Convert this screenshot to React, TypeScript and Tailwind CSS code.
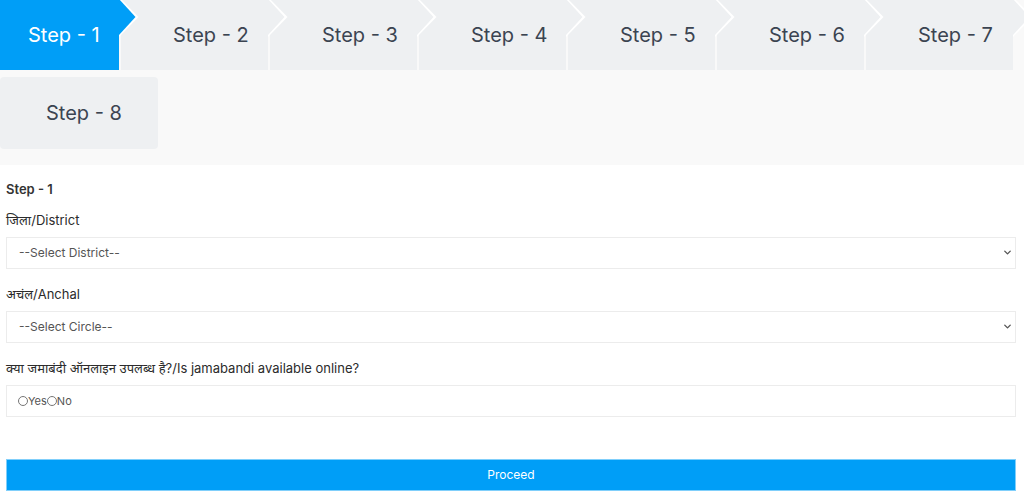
import React, { useState } from 'react';
import { ChevronDown } from 'lucide-react';

const FONT = "font-['Inter','Noto_Sans','Noto_Sans_Devanagari',sans-serif]";

const steps = [1, 2, 3, 4, 5, 6, 7];

function Chevron({ color }: { color: string }) {
  return (
    <svg
      className="absolute left-full top-0 z-10 overflow-visible"
      width="20"
      height="36"
      viewBox="0 0 20 36"
    >
      <polygon points="0,-3 19.5,17 0,37" fill="#ffffff" />
      <polygon points="0,-1 16.5,17 0,35" fill={color} />
    </svg>
  );
}

export default function App() {
  const [active] = useState(1);
  const [choice, setChoice] = useState<'yes' | 'no' | null>(null);

  return (
    <div className={`${FONT} w-[1024px] min-h-[493px] bg-white overflow-hidden`}>
      {/* Wizard steps */}
      <div className="h-[165px] bg-[#f9f9f9]">
        <div className="flex flex-wrap">
          {steps.map((n) => {
            const isActive = n === active;
            const color = isActive ? '#009ef7' : '#eef0f2';
            return (
              <div
                key={n}
                className={`relative h-[70px] flex items-center text-[20px] ${
                  n === 1 ? 'w-[119px] pl-[28px]' : 'w-[147px] ml-[2px] pl-[52px]'
                } ${isActive ? 'bg-[#009ef7] text-white' : 'bg-[#eef0f2] text-[#3b4451]'}`}
              >
                <span>Step - {n}</span>
                <Chevron color={color} />
              </div>
            );
          })}
          <div className="mt-[7px] w-[158px] h-[72px] rounded-[4px] bg-[#eef0f2] flex items-center pl-[46px] text-[20px] text-[#3b4451]">
            Step - 8
          </div>
        </div>
      </div>

      {/* Step 1 form */}
      <div className="pl-[6px] pr-[8px] pt-[14px] text-[#2b2b2b]">
        <div className="text-[13px] leading-[20px] font-semibold text-[#333]">Step - 1</div>

        <label className="block mt-[11px] text-[13px] leading-[20px]">जिला/District</label>
        <div className="relative mt-[7px]">
          <select className="appearance-none w-full h-[32px] border border-[#ececec] bg-white pl-[12px] text-[12px] text-[#555] outline-none">
            <option>--Select District--</option>
          </select>
          <ChevronDown className="absolute right-[3px] top-[10px] w-[11px] h-[11px] text-[#555] pointer-events-none" strokeWidth={3} />
        </div>

        <label className="block mt-[15px] text-[13px] leading-[20px]">अचंल/Anchal</label>
        <div className="relative mt-[7px]">
          <select className="appearance-none w-full h-[32px] border border-[#ececec] bg-white pl-[12px] text-[12px] text-[#555] outline-none">
            <option>--Select Circle--</option>
          </select>
          <ChevronDown className="absolute right-[3px] top-[10px] w-[11px] h-[11px] text-[#555] pointer-events-none" strokeWidth={3} />
        </div>

        <label className="block mt-[15px] text-[13px] leading-[20px]">
          क्या जमाबंदी ऑनलाइन उपलब्ध है?/Is jamabandi available online?
        </label>
        <div className="mt-[7px] h-[32px] border border-[#ececec] flex items-center pl-[11px] text-[11px] text-[#555]">
          <label className="flex items-center">
            <input
              type="radio"
              name="online"
              checked={choice === 'yes'}
              onChange={() => setChoice('yes')}
              className="appearance-none w-[10px] h-[10px] rounded-full border border-[#767676] bg-white checked:bg-[#009ef7] m-0"
            />
            <span>Yes</span>
          </label>
          <label className="flex items-center">
            <input
              type="radio"
              name="online"
              checked={choice === 'no'}
              onChange={() => setChoice('no')}
              className="appearance-none w-[10px] h-[10px] rounded-full border border-[#767676] bg-white checked:bg-[#009ef7] m-0"
            />
            <span>No</span>
          </label>
        </div>

        <button className="mt-[42px] w-full h-[32px] bg-[#009ef7] border border-[#80cffb] text-white text-[12px]">
          Proceed
        </button>
      </div>
    </div>
  );
}
